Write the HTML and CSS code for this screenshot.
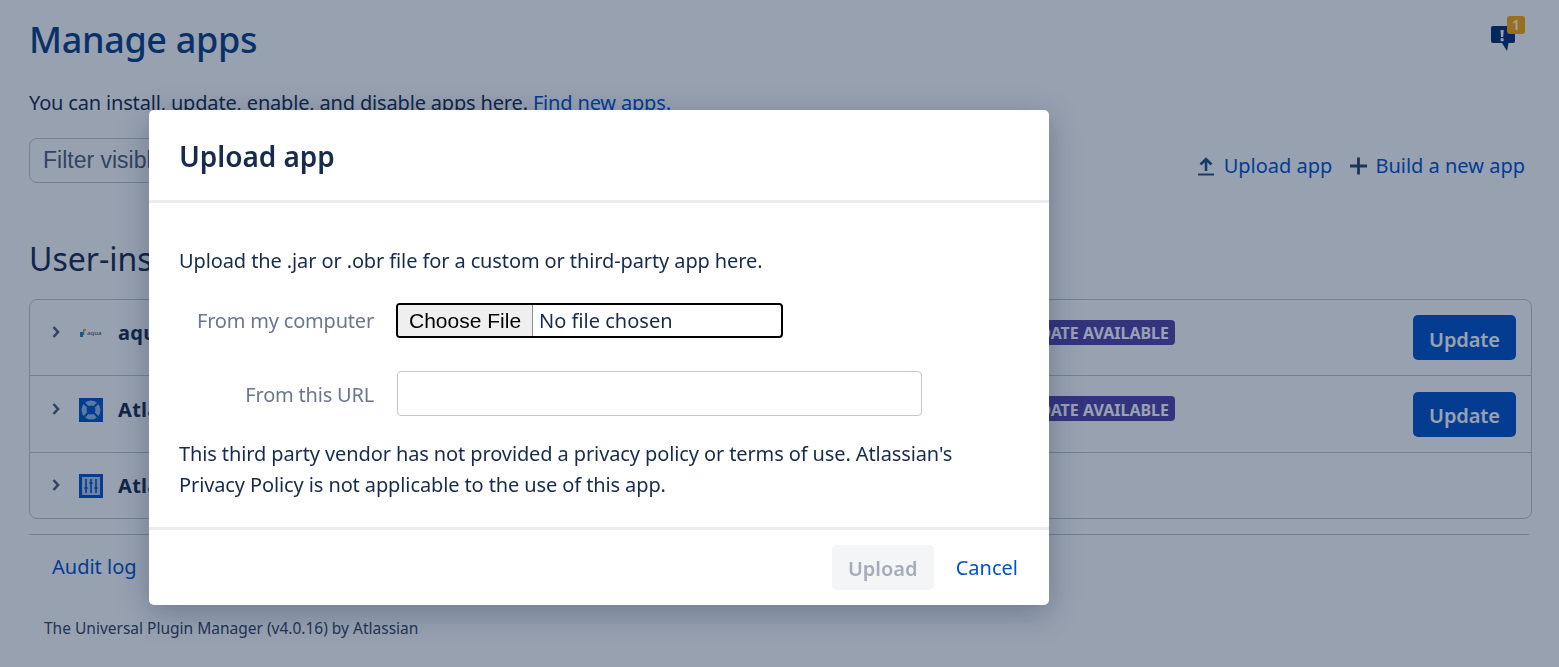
FILE: index.html
```html
<!DOCTYPE html>
<html lang="en">
<head>
<meta charset="utf-8">
<title>Manage apps</title>
<link rel="stylesheet" href="styles.css">
</head>
<body>
<main class="page">
  <header class="page-head">
    <h1 class="title">Manage apps</h1>
    <span class="notify">
      <svg class="notify-icon" width="24" height="26" viewBox="0 0 24 26"><path fill="#002d6e" d="M2 0h20a2 2 0 0 1 2 2v13a2 2 0 0 1-2 2h-4.500L16 25l-5-8H2a2 2 0 0 1-2-2V2a2 2 0 0 1 2-2z"/><path fill="#fff" d="M9.500 4h3.200l-.5 7h-2.200zM9.600 12.200h3v3h-3z"/></svg>
      <span class="notify-badge">1</span>
    </span>
  </header>
  <p class="intro">You can install, update, enable, and disable apps here. <a class="link" href="#">Find new apps.</a></p>
  <div class="toolbar">
    <input class="filter" type="text" placeholder="Filter visible apps">
    <div class="actions">
      <a class="link action" href="#"><svg width="16" height="20" viewBox="0 0 16 20"><path fill="none" stroke="#205081" stroke-width="2.600" d="M8 15V3M2.500 8.500 8 3l5.500 5.500"/><path fill="#205081" d="M0 17.500h16v2H0z"/></svg>Upload app</a>
      <a class="link action action-build" href="#"><svg width="18" height="18" viewBox="0 0 18 18"><path fill="#2c466e" d="M7.500 0h3v7.500H18v3h-7.500V18h-3v-7.500H0v-3h7.500z"/></svg>Build a new app</a>
    </div>
  </div>
  <h2 class="section">User-installed apps</h2>
  <div class="list">
    <div class="row">
      <svg class="chev" width="8" height="12" viewBox="0 0 8 12"><path fill="none" stroke="#505f79" stroke-width="2.600" d="M1.500 1 6 6l-4.500 5"/></svg>
      <svg class="app-icon" width="24" height="24" viewBox="0 0 24 24"><path fill="#2a7fb8" d="M1 11h3v5H1z"/><path fill="#36b3a8" d="M4 10h1.500v4H4z"/><path fill="#e0a43a" d="M4 8h3v2H4z"/><text class="aqua-word" x="8" y="14">aqua</text></svg>
      <span class="name">aqua Security Scanner</span>
      <span class="lozenge">UPDATE AVAILABLE</span>
      <button class="btn-primary" type="button">Update</button>
    </div>
    <div class="row">
      <svg class="chev" width="8" height="12" viewBox="0 0 8 12"><path fill="none" stroke="#505f79" stroke-width="2.600" d="M1.500 1 6 6l-4.500 5"/></svg>
      <svg class="app-icon" width="24" height="24" viewBox="0 0 24 24"><rect width="24" height="24" fill="#0052cc"/><circle cx="12" cy="12" r="9.500" fill="#fff" opacity=".6"/><circle cx="12" cy="12" r="4.500" fill="#0052cc"/><path stroke="#0052cc" stroke-width="2" d="m4 4 16 16M20 4 4 20"/></svg>
      <span class="name">Atlassian Troubleshooting</span>
      <span class="lozenge">UPDATE AVAILABLE</span>
      <button class="btn-primary" type="button">Update</button>
    </div>
    <div class="row">
      <svg class="chev" width="8" height="12" viewBox="0 0 8 12"><path fill="none" stroke="#505f79" stroke-width="2.600" d="M1.500 1 6 6l-4.500 5"/></svg>
      <svg class="app-icon" width="24" height="24" viewBox="0 0 24 24"><rect width="24" height="24" fill="#0052cc"/><rect x="3" y="3" width="18" height="18" fill="#fff" opacity=".7"/><path stroke="#0052cc" stroke-width="1.600" d="M7 5v14M12 5v14M17 5v14"/><path fill="#0052cc" d="M5.500 13h3v2h-3zM10.500 8h3v2h-3zM15.500 13h3v2h-3z"/></svg>
      <span class="name">Atlassian Universal Plugin</span>
    </div>
  </div>
  <nav class="foot-links">
    <a class="link" href="#">Audit log</a>
  </nav>
  <p class="credit">The Universal Plugin Manager (v4.0.16) by Atlassian</p>
</main>

<div class="blanket">
  <section class="modal">
    <h2 class="modal-title">Upload app</h2>
    <div class="modal-body">
      <p class="modal-lead">Upload the .jar or .obr file for a custom or third-party app here.</p>
      <div class="field field-file">
        <label class="field-label">From my computer</label>
        <input class="file" type="file">
      </div>
      <div class="field field-url">
        <label class="field-label">From this URL</label>
        <input class="url" type="text">
      </div>
      <p class="modal-note">This third party vendor has not provided a privacy policy or terms of use. Atlassian's Privacy Policy is not applicable to the use of this app.</p>
    </div>
    <footer class="modal-foot">
      <button class="btn-disabled" type="button" disabled>Upload</button>
      <a class="cancel" href="#">Cancel</a>
    </footer>
  </section>
</div>
</body>
</html>
```
FILE: styles.css
```css
* { box-sizing: border-box; }
html, body { margin: 0; height: 100%; overflow: hidden; }
body {
  background: #fff;
  color: #172b4d;
  font-family: "Noto Sans", "Open Sans", sans-serif;
  font-size: 20px;
  line-height: 30px;
}
a { text-decoration: none; }
.link { color: #0052cc; }
.page { padding: 16px 34px 0 29px; }
.page-head { display: flex; justify-content: space-between; height: 48px; }
.title { margin: 0; color: #0a3f85; font-size: 36px; line-height: 48px; font-weight: 500; letter-spacing: -.35px; }
.notify { position: relative; display: block; width: 35px; height: 36px; }
.notify-icon { position: absolute; left: 1px; top: 10px; }
.notify-badge { position: absolute; right: 0; top: 0; width: 18px; height: 18px; border-radius: 3px; background: #ffab00; color: #fff; font-size: 14px; line-height: 18px; text-align: center; font-weight: 600; }
.intro { margin: 24px 0 0; letter-spacing: -.17px; }
.toolbar { display: flex; justify-content: space-between; align-items: center; margin-top: 20px; height: 45px; }
.filter { width: 400px; height: 45px; border: 1px solid #c1c7d0; border-radius: 8px; padding: 0 13px; font: 23px "Liberation Sans", Arial, sans-serif; }
.filter::placeholder { color: #505f79; opacity: 1; }
.actions { display: flex; gap: 18px; margin-top: 11px; }
.action { display: flex; align-items: center; gap: 10px; }
.action-build { gap: 8px; }
.action-build svg { width: 17px; }
.section { margin: 54px 0 0; font-size: 32px; line-height: 44px; font-weight: 400; }
.list { margin-top: 18px; width: 1503px; border: 1px solid #c1c7d0; border-radius: 8px; }
.row { display: flex; align-items: flex-start; padding: 15px 15px 15px 22px; border-bottom: 1px solid #c1c7d0; }
.row:nth-child(2) { padding-top: 16px; }
.row:last-child { border-bottom: 0; height: 65px; }
.chev { margin-top: 11px; flex: none; }
.app-icon { margin: 6px 15px 0 19px; flex: none; }
.aqua-word { font-size: 6px; fill: #5e6c84; font-weight: 600; }
.name { flex: 1; font-weight: 700; margin-top: 3px; letter-spacing: .3px; }
.lozenge { margin: 5px 238px 0 0; height: 25px; padding: 0 6px; background: #5243aa; color: #fff; border-radius: 4px; font-size: 16px; line-height: 26px; font-weight: 700; }
.row:nth-child(2) .lozenge { margin-top: 4px; line-height: 28px; }
.btn-primary { width: 103px; height: 45px; border: 0; border-radius: 5px; padding: 3px 0 0; background: #0052cc; color: #fff; font: 600 20px "Noto Sans", sans-serif; letter-spacing: -.1px; }
.row:nth-child(2) .btn-primary { padding-top: 1px; }
.foot-links { margin-top: 15px; width: 1500px; border-top: 1px solid #c1c7d0; padding: 17px 0 0 23px; }
.credit { margin: 34px 0 0 15px; font-size: 15.5px; line-height: 24px; color: #344563; }

.blanket { position: fixed; inset: 0; background: rgba(9, 30, 66, .42); padding: 110px 0 0 149px; }
.modal { width: 900px; height: 495px; background: #fff; border-radius: 5px; box-shadow: 0 8px 32px rgba(9, 30, 66, .3); display: flex; flex-direction: column; }
.modal-title { margin: 0; height: 93px; padding: 25px 30px 0; border-bottom: 3px solid #ebecf0; font-size: 28px; line-height: 42px; font-weight: 600; letter-spacing: -.05px; }
.modal-body { flex: 1; padding: 43px 30px 0; letter-spacing: -.11px; }
.modal-lead { margin: 0; }
.field { display: flex; align-items: center; }
.field-file { margin-top: 27px; }
.field-url { margin-top: 33px; }
.field-label { width: 195px; margin-right: 22px; text-align: right; color: #6b778c; letter-spacing: -.2px; }
.field-url .field-label { padding-top: 2px; }
.file { width: 387px; height: 35px; border: 2px solid #000; border-radius: 4px; font: 20px "Noto Sans", sans-serif; color: #172b4d; padding: 0; }
.file::file-selector-button { height: 100%; margin: 0 6px 0 0; padding: 0 11px; border: 0; border-right: 1px solid #8f8f8f; background: #efefef; color: #000; font: 21px "Liberation Sans", Arial, sans-serif; letter-spacing: 0; }
.url { width: 525px; height: 45px; margin-left: 1px; border: 1px solid #c1c7d0; border-radius: 4px; }
.modal-note { margin: 22px 0 0; line-height: 31px; }
.modal-foot { display: flex; justify-content: flex-end; align-items: center; gap: 22px; height: 78px; padding: 0 31px 0 0; border-top: 3px solid #ebecf0; }
.btn-disabled { width: 102px; height: 45px; border: 0; border-radius: 5px; padding: 2px 0 0; background: #f4f5f7; color: #a5adba; font: 600 20px "Noto Sans", sans-serif; }
.cancel { color: #0052cc; }
```
